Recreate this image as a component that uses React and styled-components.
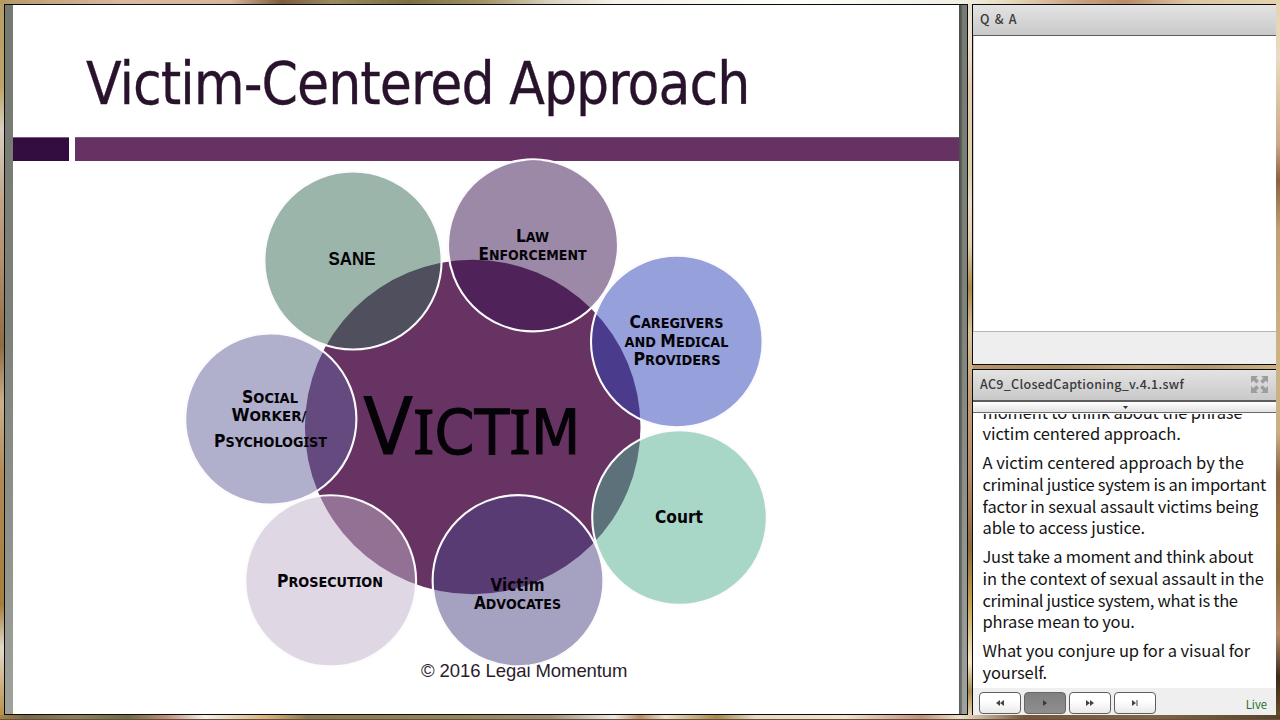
import styled, { createGlobalStyle } from "styled-components";

const GlobalStyle = createGlobalStyle`
    * {
      box-sizing: border-box;
    }
    body {
      margin: 0;
      overflow: hidden;
    }
`

const Room = styled.div`
    width: 1280px;
    height: 720px;
    display: flex;
    gap: 4px;
    padding: 4px 4px 5px 4px;
    background:
      linear-gradient(90deg, #b39a62 0, #c4a982 4%, #d9b9a4 10%, #d3b79c 18%, #7b5c3c 22%, #9a8a62 26%, #7d6e44 32%, #a5946a 38%, #d8d2c0 43%, #f5f1e8 48%, #fffffa 62%, #f1efe4 75%, #e5d9ba 79%, #c9a384 84%, #b98b6a 88%, #dcc6a4 93%, #e4d3ae 100%) 0 0 / 100% 4px no-repeat,
      linear-gradient(#5d5447, #5d5447) 0 719px / 100% 1px no-repeat,
      linear-gradient(90deg, #a98240 0, #7a6748 2%, #8f8057 6%, #6f6a3f 10%, #c08d78 13%, #f4efe6 16%, #dcae72 21%, #8b7850 24%, #97855a 36%, #a08f74 43%, #eee6df 48%, #bd8a63 50%, #f0dfc8 52%, #a98746 56%, #e9d9c0 59%, #f3e2cc 66%, #c58f78 72%, #f0e0c8 75%, #7a5537 80%, #806442 90%, #5b4227 100%) 0 715px / 100% 5px no-repeat,
      linear-gradient(#b7a065 0, #bca468 12%, #d7cfc0 18%, #c0a489 28%, #b4906f 36%, #8f6c43 48%, #c9b08c 56%, #b08a56 66%, #a67e3c 84%, #e3d9cb 90%, #b58a41 100%) 0 0 / 5px 100% no-repeat,
      linear-gradient(#e7e0cf 0, #efe4d4 6%, #e5cbb0 12%, #d9cfa9 24%, #eadcc8 28%, #e3cfae 34%, #a98a4e 40%, #d8c29c 46%, #c59c78 56%, #b58a68 66%, #8e6a3c 76%, #c5a552 84%, #f4e9cc 92%, #a88d52 96%, #efe0c0 100%) 967px 0 / 6px 100% no-repeat,
      linear-gradient(#e4d3ae 0, #e9dcc2 8%, #d9c3a0 14%, #cda78a 20%, #8c6240 25%, #c2a074 32%, #ccb384 48%, #c9b183 60%, #8b6242 66%, #9b7440 74%, #8c6a3d 80%, #b48a6a 88%, #3c2a17 94%, #6d4f2c 100%) 1275px 0 / 5px 100% no-repeat,
      linear-gradient(90deg, #b9946c, #a98f62 30%, #c3a67e 55%, #b0976c 75%, #cdb486) 967px 364px / 313px 6px no-repeat;
`

const SlidePod = styled.main`
    width: 964px;
    height: 711px;
    display: flex;
    border: 1px solid #0b0b0b;
`
const Gutter = styled.div`
    width: 8px;
    flex-shrink: 0;
    background: ${(props) =>
      props.$right
        ? "linear-gradient(90deg, rgba(40,44,42,0.6), rgba(40,44,42,0.35) 35%, rgba(40,44,42,0) 45%), linear-gradient(#767b73, #80847b 45%, #9fa29d)"
        : "linear-gradient(#747971, #7d8178 45%, #9fa39c)"};
`
const Slide = styled.article`
    flex: 1;
    min-width: 0;
    display: flex;
    flex-direction: column;
    background-color: #ffffff;
`
const Title = styled.h1`
    height: 132px;
    margin: 0;
    padding: 38.500px 0 0 73px;
    font-family: "DejaVu Sans Condensed", "DejaVu Sans", sans-serif;
    font-stretch: condensed;
    font-size: 58px;
    font-weight: 400;
    line-height: 80px;
    letter-spacing: -0.95px;
    white-space: nowrap;
    color: #29132c;
    -webkit-text-stroke: 0.3px #29132c;
`
const Divider = styled.div`
    height: 24px;
    display: flex;
    gap: 6px;
`
const Bar = styled.div`
    width: ${(props) => props.$width || "auto"};
    flex: ${(props) => (props.$width ? "none" : 1)};
    background-color: ${(props) => props.$color};
    border-top: 1px solid #7c5c7c;
`
const Diagram = styled.svg`
    display: block;
    width: 946px;
    height: 553px;
    overflow: visible;
    font-family: "DejaVu Sans Condensed", "DejaVu Sans", sans-serif;
    font-stretch: condensed;
`
const Label = styled.text`
    font-size: 17px;
    font-weight: ${(props) => props.$weight || 700};
    fill: #050307;
    stroke: #050307;
    stroke-width: ${(props) => (props.$weight === 400 ? 0.9 : 0)};
`
const Copyright = styled.text`
    font-family: "Liberation Sans", Arial, sans-serif;
    font-size: 18.5px;
    fill: #2b1b2e;
`

const Side = styled.aside`
    width: 304px;
    display: flex;
    flex-direction: column;
    gap: 4px;
`
const Pod = styled.section`
    height: ${(props) => props.$height}px;
    display: flex;
    flex-direction: column;
    border: solid #0b0b0b;
    border-width: 1px 0 ${(props) => (props.$open ? 0 : 1)}px 1px;
    background-color: #ffffff;
`
const PodHeader = styled.header`
    height: ${(props) => props.$height}px;
    flex-shrink: 0;
    display: flex;
    align-items: center;
    justify-content: space-between;
    padding: 0 8px 1px 7px;
    border-bottom: ${(props) => props.$rule}px solid #5c5c5c;
    background: linear-gradient(#e3e3e3, #c9c9c9);
`
const PodTitle = styled.h2`
    margin: 0 0 1px;
    font-family: "Noto Sans CJK SC", "Noto Sans", sans-serif;
    font-size: 12.5px;
    font-weight: 500;
    line-height: 20px;
    letter-spacing: ${(props) => props.$spacing}px;
    white-space: nowrap;
    color: #3a3a3a;
`
const Questions = styled.div`
    flex: 1;
    border-left: 1px solid #cfcfcf;
`
const AskBar = styled.footer`
    height: 33px;
    border-top: 1px solid #b4b7b7;
    background-color: #eeeeee;
`
const Collapse = styled.div`
    height: 11px;
    flex-shrink: 0;
    display: flex;
    justify-content: center;
    padding: 4px 0 0 1px;
    border-bottom: 1px solid #6b6b6b;
    background: linear-gradient(#ffffff, #e2e2e2);
`
const Captions = styled.div`
    flex: 1;
    min-height: 0;
    display: flex;
    flex-direction: column;
    justify-content: flex-end;
    overflow: hidden;
    margin-top: 1px;
    padding: 0 0 4.500px 9.500px;
`
const Caption = styled.p`
    margin: 0 0 7.6px;
    font-family: "Noto Sans CJK SC", "Noto Sans", sans-serif;
    font-size: 16.5px;
    line-height: 21.6px;
    white-space: nowrap;
    color: #141414;
    &:last-child {
      margin-bottom: 0;
    }
`
const Line = styled.span`
    display: block;
    letter-spacing: ${(props) => props.$spacing}px;
`
const Controls = styled.footer`
    height: 27px;
    flex-shrink: 0;
    display: flex;
    align-items: flex-start;
    gap: 3px;
    padding: 4px 9px 0 6px;
    background-color: #efefef;
`
const Button = styled.button`
    width: 42px;
    height: 22px;
    display: flex;
    align-items: center;
    justify-content: center;
    padding: 0;
    border: 1px solid ${(props) => (props.$active ? "#666666" : "#5f5f5f")};
    border-radius: 4px;
    background: ${(props) =>
      props.$active ? "linear-gradient(#808080, #8e8e8e)" : "linear-gradient(#ffffff 40%, #e9e9e9)"};
`
const Live = styled.span`
    margin-left: auto;
    padding-top: 2px;
    font-family: "Noto Sans CJK SC", "Noto Sans", sans-serif;
    font-size: 11.3px;
    line-height: 21px;
    color: #23702a;
`

// each line is [center x, baseline, width, ...runs], a run is [text, font size]
const circles = [
  {
    name: "sane", cx: 353, cy: 260.5, rx: 88.6, ry: 89, color: "rgb(55,107,87)",
    lines: [[352, 265, 47, ["SANE", 17.5]]],
    font: "Liberation Sans",
  },
  {
    name: "law", cx: 533, cy: 245.4, rx: 85, ry: 86, color: "rgb(55,19,79)",
    lines: [
      [532.5, 242, 33, ["L", 17], ["AW", 14]],
      [532.5, 260, 108, ["E", 17], ["NFORCEMENT", 14]],
    ],
  },
  {
    name: "medical", cx: 676.8, cy: 341.5, rx: 85.8, ry: 85.8, color: "rgb(45,67,183)",
    lines: [
      [676.5, 328, 94, ["C", 17], ["AREGIVERS", 14]],
      [676.5, 347, 104, ["AND ", 14], ["M", 17], ["EDICAL", 14]],
      [677, 365, 87, ["P", 17], ["ROVIDERS", 14]],
    ],
  },
  {
    name: "court", cx: 679.5, cy: 517.5, rx: 87.3, ry: 87.3, color: "rgb(81,175,145)",
    lines: [[679, 523, 48, ["Court", 17]]],
  },
  {
    name: "advocates", cx: 518, cy: 580.7, rx: 85.4, ry: 85.6, color: "rgb(75,67,131)",
    lines: [
      [517.5, 590.5, 54, ["Victim", 17]],
      [517.5, 609, 87, ["A", 17], ["DVOCATES", 14]],
    ],
  },
  {
    name: "prosecution", cx: 330.7, cy: 580.8, rx: 85.4, ry: 85.6, color: "rgb(191,175,199)",
    lines: [[330, 587, 106, ["P", 17], ["ROSECUTION", 14]]],
  },
  {
    name: "social", cx: 270.8, cy: 419, rx: 85.6, ry: 85.6, color: "rgb(97,97,155)",
    lines: [
      [270, 403, 56, ["S", 17], ["OCIAL", 14]],
      [269, 421, 75, ["W", 17], ["ORKER/", 14]],
      [270.5, 447, 113, ["P", 17], ["SYCHOLOGIST", 14]],
    ],
  },
];

// lines of a caption are [text, letter spacing]
const captions = [
  [["moment to think about the phrase", -0.12], ["victim centered approach.", -0.1]],
  [
    ["A victim centered approach by the", 0],
    ["criminal justice system is an important", -0.3],
    ["factor in sexual assault victims being", -0.12],
    ["able to access justice.", -0.1],
  ],
  [
    ["Just take a moment and think about", -0.22],
    ["in the context of sexual assault in the", -0.02],
    ["criminal justice system, what is the", -0.31],
    ["phrase mean to you.", -0.21],
  ],
  [["What you conjure up for a visual for", -0.06], ["yourself.", -0.1]],
];

const SmallCaps = ({ line, font, weight }) => {
  const [x, y, width, ...runs] = line;
  return (
    <Label
      x={x - width / 2}
      y={y}
      textLength={width}
      lengthAdjust="spacingAndGlyphs"
      $weight={weight}
      fontFamily={font}
    >
      {runs.map(([text, size]) =>
        text.split(/(I)/).map((part, i) => (
          <tspan key={text + i} fontSize={size} fontFamily={part === "I" ? "Noto Sans" : undefined}>
            {part}
          </tspan>
        ))
      )}
    </Label>
  );
};

const Relations = () => (
  <Diagram viewBox="13 161 946 553">
    <ellipse cx="472.7" cy="427" rx="167.8" ry="167.3" fill="#663363" />
    <Copyright x="421" y="677" textLength="206.5">© 2016 Legal Momentum</Copyright>
    {circles.map((c) => (
      <ellipse
        key={c.name}
        cx={c.cx}
        cy={c.cy}
        rx={c.rx}
        ry={c.ry}
        fill={c.color}
        fillOpacity="0.5"
        stroke="#fdfbfd"
        strokeWidth="2.1"
      />
    ))}
    <SmallCaps line={[471.8, 453.5, 217, ["V", 78], ["ICTIM", 61.5]]} weight={400} />
    {circles.map((c) =>
      c.lines.map((line) => <SmallCaps key={c.name + line[1]} line={line} font={c.font} />)
    )}
  </Diagram>
);

const FullScreen = () => (
  <svg width="17" height="17" viewBox="0 0 17 17" fill="#9d9d9d">
    <path d="M0 0h7L5 2l3 3-2.6 2.6-3-3L0 7z" />
    <path d="M17 0v7l-2.2-2.2-3 3L9.300 5l3-3L10 0z" />
    <path d="M0 17v-7l2.300 2.300 3-3L8 12l-3 3 2 2z" />
    <path d="M17 17h-7l2.200-2.200-3-3 2.500-2.500 3 3L17 10z" />
  </svg>
);

const Glyph = ({ d, color = "#444444", width = 8 }) => (
  <svg width={width} height="6" viewBox={`0 0 ${width} 6`} fill={color}>
    <path d={d} />
  </svg>
);

const App = () => {
  return (
    <Room>
      <GlobalStyle />
      <SlidePod>
        <Gutter />
        <Slide>
          <Title>Victim-Centered Approach</Title>
          <Divider>
            <Bar $width="55.5px" $color="#340d40" />
            <Bar $color="#663163" />
          </Divider>
          <Relations />
        </Slide>
        <Gutter $right />
      </SlidePod>
      <Side>
        <Pod $height={361}>
          <PodHeader $height={31} $rule={1}>
            <PodTitle $spacing={1.2}>Q &amp; A</PodTitle>
          </PodHeader>
          <Questions />
          <AskBar />
        </Pod>
        <Pod $height={346} $open>
          <PodHeader $height={32} $rule={2}>
            <PodTitle $spacing={0.3}>AC9_ClosedCaptioning_v.4.1.swf</PodTitle>
            <FullScreen />
          </PodHeader>
          <Collapse>
            <svg width="5" height="3" viewBox="0 0 5 3" fill="#333333">
              <path d="M0 0h5L2.500 3z" />
            </svg>
          </Collapse>
          <Captions>
            {captions.map((lines) => (
              <Caption key={lines[0][0]}>
                {lines.map(([text, spacing]) => (
                  <Line key={text} $spacing={spacing}>{text}</Line>
                ))}
              </Caption>
            ))}
          </Captions>
          <Controls>
            <Button aria-label="Rewind">
              <Glyph d="M4 0v6L0 3zM8 0v6L4 3z" />
            </Button>
            <Button aria-label="Play" $active>
              <Glyph d="M0 0l4 3-4 3z" color="#3a3a3a" width={4} />
            </Button>
            <Button aria-label="Fast forward">
              <Glyph d="M0 0l4 3-4 3zM4 0l4 3-4 3z" />
            </Button>
            <Button aria-label="Go to live">
              <Glyph d="M0 0l4 3-4 3zM4.500 0h1v6h-1z" width={6} />
            </Button>
            <Live>Live</Live>
          </Controls>
        </Pod>
      </Side>
    </Room>
  );
};

export default App
